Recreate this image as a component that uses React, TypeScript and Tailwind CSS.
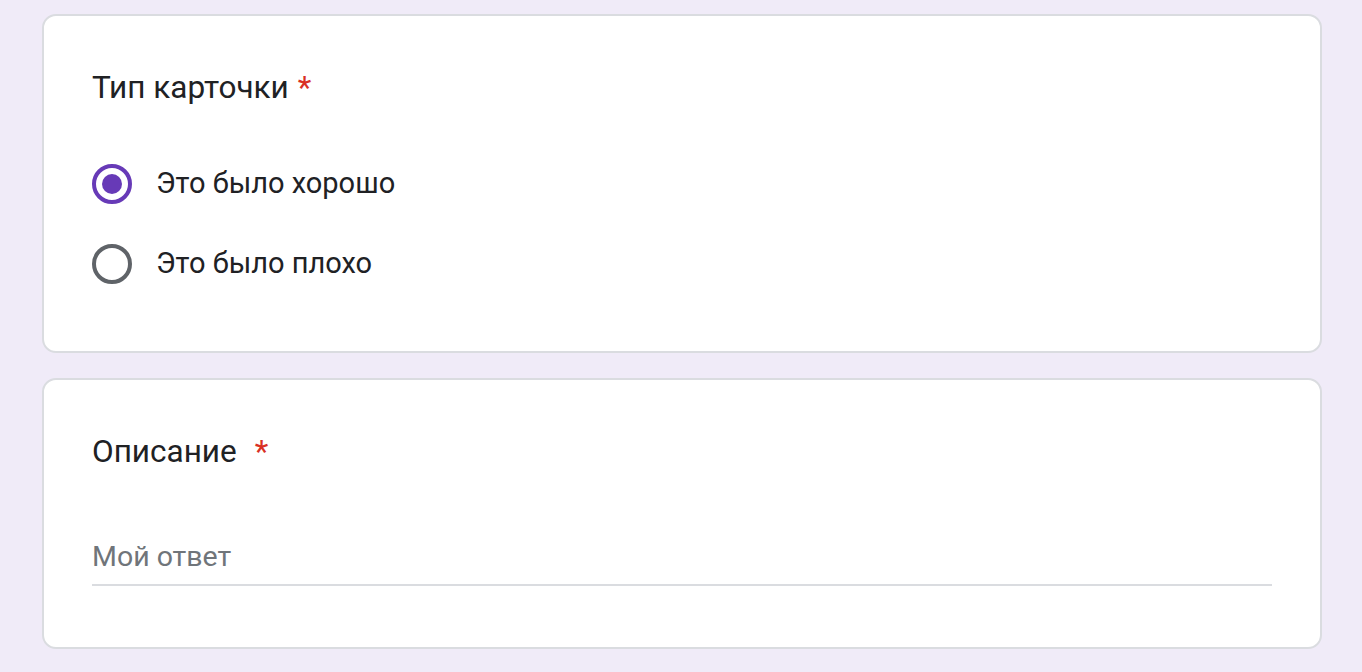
import { useState } from 'react';

type Option = { id: string; label: string };

const options: Option[] = [
  { id: 'good', label: 'Это было хорошо' },
  { id: 'bad', label: 'Это было плохо' },
];

function Radio({ checked }: { checked: boolean }) {
  return (
    <span
      className={`flex h-[40px] w-[40px] shrink-0 items-center justify-center rounded-full border-[4px] ${
        checked ? 'border-[#673ab7]' : 'border-[#5f6368]'
      }`}
    >
      {checked && <span className="h-[20px] w-[20px] rounded-full bg-[#673ab7]" />}
    </span>
  );
}

export default function App() {
  const [choice, setChoice] = useState('good');
  const [answer, setAnswer] = useState('');

  return (
    <div className="min-h-[672px] bg-[#f0ebf8] pl-[42px] pr-[40px] pt-[14px] pb-[24px] font-['Roboto',sans-serif] text-[#202124]">
      <div className="flex flex-col gap-[25px]">
        <section className="rounded-[14px] border-2 border-[#dadce0] bg-white px-[48px] pt-[54px] pb-[67px]">
          <h2 className="flex items-center text-[31.5px] leading-[36px]">
            Тип карточки
            <span className="ml-[9px] text-[#d93025]">*</span>
          </h2>
          <div className="mt-[58px] flex flex-col gap-[40px]">
            {options.map((o) => (
              <label
                key={o.id}
                className="flex h-[40px] cursor-pointer items-center gap-[24px] text-[29px]"
                onClick={() => setChoice(o.id)}
              >
                <Radio checked={choice === o.id} />
                <span>{o.label}</span>
              </label>
            ))}
          </div>
        </section>

        <section className="rounded-[14px] border-2 border-[#dadce0] bg-white px-[48px] pt-[54px] pb-[61px]">
          <h2 className="flex items-center text-[31.5px] leading-[36px]">
            Описание
            <span className="ml-[18px] text-[#d93025]">*</span>
          </h2>
          <div className="mt-[72px] border-b-2 border-[#dadce0] pb-[12px]">
            <input
              type="text"
              value={answer}
              onChange={(e) => setAnswer(e.target.value)}
              placeholder="Мой ответ"
              className="block h-[30px] w-full bg-transparent text-[28.5px] leading-[30px] text-[#202124] outline-none placeholder:text-[#70757a]"
            />
          </div>
        </section>
      </div>
    </div>
  );
}
